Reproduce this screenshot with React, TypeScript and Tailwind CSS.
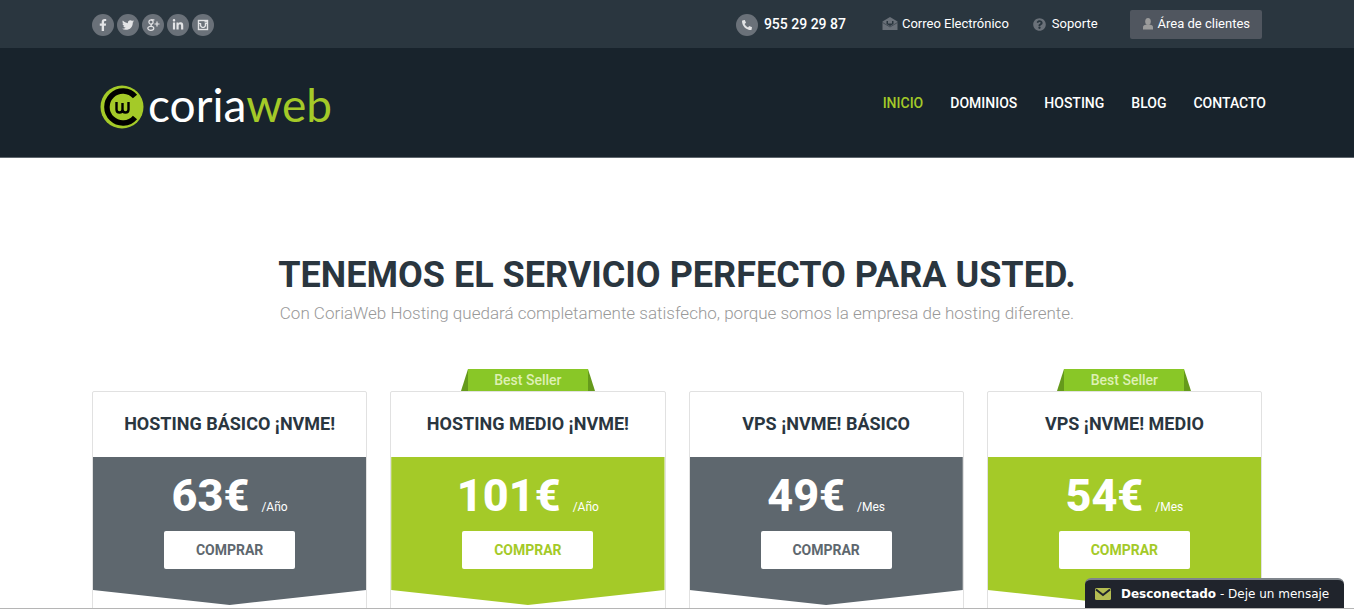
import React from 'react';
import { FaFacebookF, FaTwitter, FaLinkedinIn, FaPhoneAlt, FaQuestionCircle } from 'react-icons/fa';

interface Plan {
  name: string;
  price: string;
  period: string;
  bestSeller: boolean;
}

const plans: Plan[] = [
  { name: 'HOSTING BÁSICO ¡NVME!', price: '63€', period: '/Año', bestSeller: false },
  { name: 'HOSTING MEDIO ¡NVME!', price: '101€', period: '/Año', bestSeller: true },
  { name: 'VPS ¡NVME! BÁSICO', price: '49€', period: '/Mes', bestSeller: false },
  { name: 'VPS ¡NVME! MEDIO', price: '54€', period: '/Mes', bestSeller: true },
];

const links = ['INICIO', 'DOMINIOS', 'HOSTING', 'BLOG', 'CONTACTO'];

const GooglePlusIcon = () => (
  <svg viewBox="0 0 14 14" className="size-3.5" fill="none" stroke="currentColor" strokeWidth="1.2">
    <circle cx="5" cy="4" r="2.1" />
    <path d="M5 1.900h3.400M6 6c-1.600.8-1.300 1.400-.2 2.100" />
    <ellipse cx="4.800" cy="10.300" rx="3" ry="2" />
    <path d="M11 3.500v5M8.500 6h5" />
  </svg>
);

const InstagramIcon = () => (
  <svg viewBox="0 0 12 12" className="size-3" fill="none" stroke="currentColor">
    <rect x="1.500" y="1.500" width="9" height="9" strokeWidth="1.400" />
    <path d="M1.500 4.500h2.500M8 4.500h2.500" strokeWidth="1.200" />
    <path d="M7.500 2.800h2.500" strokeWidth="1.400" />
    <path d="M4 4.300a2.500 2.500 0 1 0 4 0" strokeWidth="1.300" />
  </svg>
);

const socials = [
  { label: 'Facebook', icon: <FaFacebookF className="size-3" /> },
  { label: 'Twitter', icon: <FaTwitter className="size-3" /> },
  { label: 'Google Plus', icon: <GooglePlusIcon /> },
  { label: 'LinkedIn', icon: <FaLinkedinIn className="size-3" /> },
  { label: 'Instagram', icon: <InstagramIcon /> },
];

const TopBar = () => (
  <div className="bg-[#2a363f]">
    <div className="mx-auto flex h-12 max-w-[1170px] items-center justify-between">
      <ul className="flex gap-[3px] pt-0.5">
        {socials.map((s) => (
          <li key={s.label}>
            <a
              href="#"
              aria-label={s.label}
              className="flex size-[22px] items-center justify-center rounded-full bg-[#6a7179] text-[#e3e4e6]"
            >
              {s.icon}
            </a>
          </li>
        ))}
      </ul>

      <div className="flex items-center text-[13px] text-white">
        <a href="#" className="flex items-center gap-1.5 text-sm font-medium">
          <span className="mt-0.5 flex size-[22px] items-center justify-center rounded-full bg-[#6a7179] text-[#e3e4e6]">
            <FaPhoneAlt className="size-2.5" />
          </span>
          955 29 29 87
        </a>
        <a href="#" className="ml-9 flex items-center gap-1">
          <svg viewBox="0 0 16 14" className="h-3.5 w-4 text-[#6a7179]" fill="currentColor">
            <path d="M8 0 .5 4.500V13h15V4.500z" />
            <path d="M4.500 4h7v3L8 9 4.500 7z" fill="#2a363f" />
            <path d="M6 4h4v2.500H6z" />
            <path d="M.5 5.500 8 10l7.500-4.500" fill="none" stroke="#2a363f" strokeWidth=".6" />
          </svg>
          Correo Electrónico
        </a>
        <a href="#" className="ml-6 flex items-center gap-1.5">
          <FaQuestionCircle className="size-[13px] text-[#6a7179]" />
          Soporte
        </a>
        <a
          href="#"
          className="ml-8 flex h-[29px] items-center gap-1 rounded-xs bg-[#50565f] px-3"
        >
          <svg viewBox="0 0 12 12" className="size-3 text-[#9b9b9b]" fill="currentColor">
            <ellipse cx="6" cy="3.500" rx="2.800" ry="3.500" />
            <path d="M1 11.500V9.500Q1 7 4 6.800h4Q11 7 11 9.500v2z" />
          </svg>
          Área de clientes
        </a>
      </div>
    </div>
  </div>
);

const Logo = () => (
  <a href="#" aria-label="coriaweb" className="ml-2 flex items-center gap-1 pt-2">
    <svg viewBox="0 0 44 44" className="size-11">
      <circle cx="22" cy="22" r="21.500" fill="#a4ca28" />
      <path
        d="M35 11.500A16 16 0 1 0 35 32.500"
        fill="none"
        stroke="#000"
        strokeWidth="5.500"
      />
      <path
        d="M16.500 17v7.500q0 3 3 3t3-3V18v6.500q0 3 3 3t3-3V17"
        fill="none"
        stroke="#000"
        strokeWidth="2.400"
      />
    </svg>
    <span className="-mt-1 font-['Lato'] text-[46px] leading-[44px] text-white">
      coria<span className="text-[#a4ca28]">web</span>
    </span>
  </a>
);

const Header = () => (
  <header className="border-b border-[#5f676e] bg-[#18232c]">
    <div className="mx-auto flex h-[109px] max-w-[1170px] items-center justify-between">
      <Logo />
      <nav className="-mr-1 flex gap-[27px] text-sm font-medium">
        {links.map((link, i) => (
          <a key={link} href="#" className={i === 0 ? 'text-[#a4ca28]' : 'text-white'}>
            {link}
          </a>
        ))}
      </nav>
    </div>
  </header>
);

const Ribbon = () => (
  <div className="absolute bottom-full left-1/2 mb-px flex h-[22px] w-[134px] -translate-x-1/2 items-center justify-center text-sm font-medium text-[#def0b4]">
    <svg viewBox="0 0 134 22" className="absolute inset-0 size-full">
      <path d="M7 0 0 22h134L127 0z" fill="#659a1b" />
      <path d="M7 0h120v22H7z" fill="#89c727" />
    </svg>
    <span className="relative">Best Seller</span>
  </div>
);

const PlanCard = ({ plan }: { plan: Plan }) => (
  <article className="relative h-[600px] rounded-xs border border-[#e1e1e1] bg-white text-center">
    {plan.bestSeller && <Ribbon />}
    <h2 className="flex h-[65px] items-center justify-center pb-0.5 text-lg font-bold text-[#2a363f]">
      {plan.name}
    </h2>
    <div
      className={`h-[148px] pt-[15px] text-white [clip-path:polygon(0_0,100%_0,100%_133px,50%_100%,0_133px)] ${
        plan.bestSeller ? 'bg-[#a4ca28]' : 'bg-[#5e676e]'
      }`}
    >
      <p className="flex items-baseline justify-center gap-3 leading-[48px]">
        <span className="text-[45px] font-extrabold">{plan.price}</span>
        <span className="text-xs">{plan.period}</span>
      </p>
      <button
        type="button"
        className={`mt-[11px] h-[38px] w-[131px] rounded-xs bg-white text-sm font-bold ${
          plan.bestSeller ? 'text-[#a4ca28]' : 'text-[#5e676e]'
        }`}
      >
        COMPRAR
      </button>
    </div>
  </article>
);

const ChatWidget = () => (
  <button
    type="button"
    className="fixed right-2.5 bottom-0.5 flex h-[30px] w-[259px] items-center gap-2.5 rounded-t-md border-t-2 border-[#7f858b] bg-[#20242c] px-2.5 font-['DejaVu_Sans'] text-xs text-white"
  >
    <svg viewBox="0 0 16 12" className="h-3 w-4">
      <rect width="16" height="12" rx="1.500" fill="#b4bd52" />
      <path d="M1 1.500 8 7l7-5.500" fill="none" stroke="#20242c" strokeWidth="2" />
    </svg>
    <span>
      <b>Desconectado</b> - Deje un mensaje
    </span>
  </button>
);

const App: React.FC = () => {
  return (
    <div className="relative h-screen overflow-hidden bg-white font-['Roboto',sans-serif]">
      <TopBar />
      <Header />

      <main className="mx-auto max-w-[1170px] pt-[95px] text-center">
        <h1 className="text-[36px] leading-[44px] font-bold text-[#2a363f]">
          TENEMOS EL SERVICIO PERFECTO PARA USTED.
        </h1>
        <p className="mt-1 text-[17px] leading-6 font-light text-[#999]">
          Con CoriaWeb Hosting quedará completamente satisfecho, porque somos la empresa de hosting
          diferente.
        </p>
        <section className="mt-[66px] grid grid-cols-4 gap-[23px]">
          {plans.map((plan) => (
            <PlanCard key={plan.name} plan={plan} />
          ))}
        </section>
      </main>

      <ChatWidget />
      <div className="fixed inset-x-0 bottom-0 h-0.5 border-t border-[#b5b5b5] bg-white" />
    </div>
  );
};

export default App;
